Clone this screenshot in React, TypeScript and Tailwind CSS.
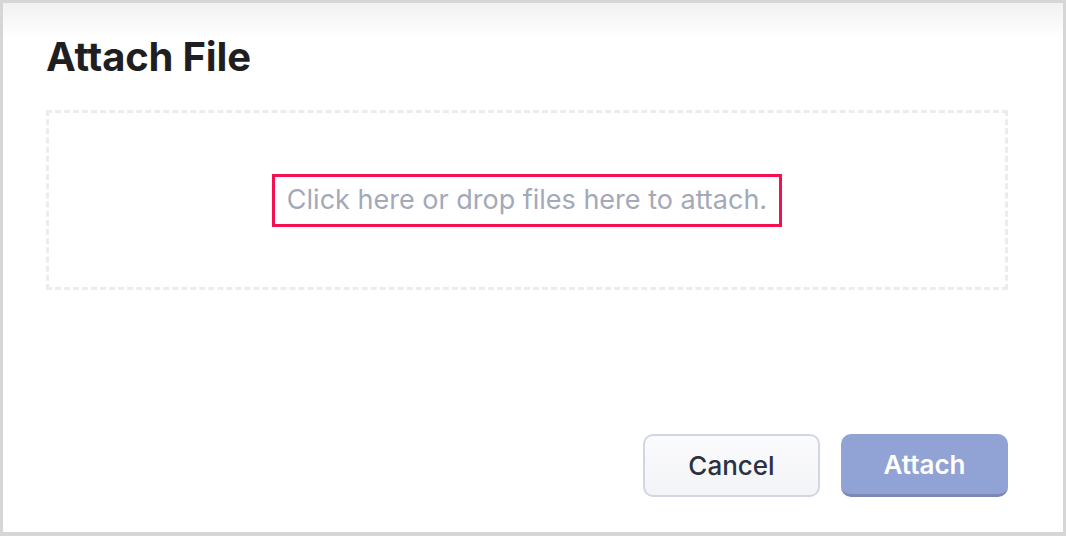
export default function App() {
  return (
    <div className="w-[1066px] h-[536px] bg-[#d6d6d6] pt-[3px] px-[3px] pb-[4px] font-['Inter','Liberation_Sans',sans-serif]">
      <div className="h-full bg-gradient-to-b from-[#f1f1f1] to-white to-[36px] bg-white flex flex-col pl-[43px] pr-[55px]">
        <h1 className="mt-[30px] text-[40px] leading-[48px] font-bold text-[#1f1f21] tracking-[-0.2px]">
          Attach File
        </h1>

        <div className="mt-[29px] h-[180px] border-[3px] border-dashed border-[#ececec] flex items-center justify-center">
          <div className="border-[3px] border-[#f5104f] px-[12px] h-[53px] flex items-center">
            <span className="text-[27px] text-[#a3a9b8]">
              Click here or drop files here to attach.
            </span>
          </div>
        </div>

        <div className="mt-auto mb-[35px] flex justify-end gap-[21px]">
          <button className="w-[177px] h-[63px] rounded-[10px] border-2 border-[#d2d6e4] bg-gradient-to-b from-[#fbfbfd] to-[#f3f4f7] text-[26px] font-medium text-[#2b3142]">
            Cancel
          </button>
          <button className="w-[167px] h-[63px] rounded-[10px] bg-[#91a3d5] border-b-[3px] border-[#7d87b5] text-[26px] font-semibold text-white">
            Attach
          </button>
        </div>
      </div>
    </div>
  )
}
